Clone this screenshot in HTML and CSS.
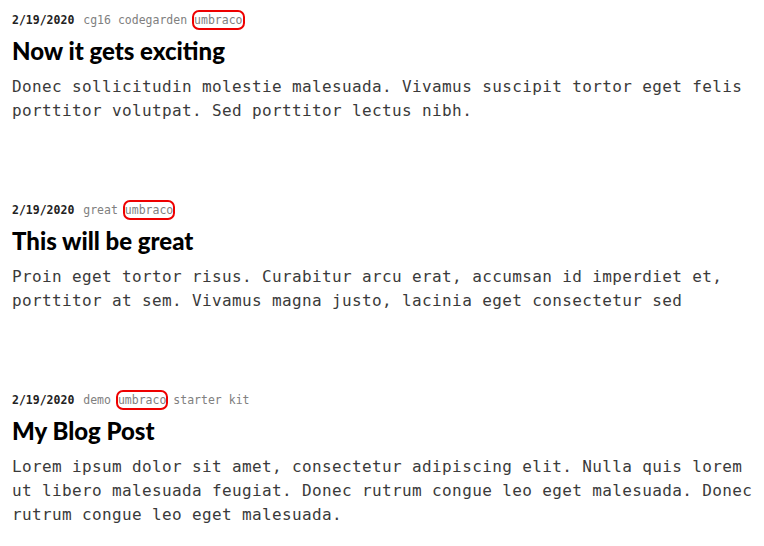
FILE: index.html
```html
<!DOCTYPE html>
<html>
<head>
<meta charset="utf-8">
<link rel="stylesheet" href="styles.css">
</head>
<body>
<main class="posts">
  <article class="post">
    <div class="meta"><span class="date">2/19/2020</span> <span class="tag">cg16</span> <span class="tag">codegarden</span> <span class="tag tag-active">umbraco</span></div>
    <h2 class="title">Now it gets exciting</h2>
    <p class="excerpt">Donec sollicitudin molestie malesuada. Vivamus suscipit tortor eget felis porttitor volutpat. Sed porttitor lectus nibh.</p>
  </article>
  <article class="post">
    <div class="meta"><span class="date">2/19/2020</span> <span class="tag">great</span> <span class="tag tag-active">umbraco</span></div>
    <h2 class="title">This will be great</h2>
    <p class="excerpt">Proin eget tortor risus. Curabitur arcu erat, accumsan id imperdiet et, porttitor at sem. Vivamus magna justo, lacinia eget consectetur sed</p>
  </article>
  <article class="post">
    <div class="meta"><span class="date">2/19/2020</span> <span class="tag">demo</span> <span class="tag tag-active">umbraco</span> <span class="tag">starter</span> <span class="tag">kit</span></div>
    <h2 class="title">My Blog Post</h2>
    <p class="excerpt">Lorem ipsum dolor sit amet, consectetur adipiscing elit. Nulla quis lorem ut libero malesuada feugiat. Donec rutrum congue leo eget malesuada. Donec rutrum congue leo eget malesuada.</p>
  </article>
</main>
</body>
</html>
```
FILE: styles.css
```css
html, body {
  margin: 0;
  padding: 0;
  background: #fff;
}
.posts {
  padding: 11px 8px 0 12px;
}
.post {
  margin-bottom: 78px;
}
.meta {
  font-family: "DejaVu Sans Mono", "Liberation Mono", monospace;
  font-size: 11.5px;
  line-height: 19px;
  height: 19px;
  color: #808080;
  white-space: nowrap;
}
.date {
  color: #222;
  font-weight: bold;
  margin-right: 2px;
}
.tag-active {
  padding: 1px 0;
  outline: 2px solid #e00;
  border-radius: 5px;
}
.title {
  font-family: Lato, "Open Sans", sans-serif;
  font-weight: 900;
  font-size: 24px;
  line-height: 29px;
  margin: 6px 0 0;
  color: #000;
}
.excerpt {
  font-family: "DejaVu Sans Mono", "Liberation Mono", monospace;
  font-size: 16px;
  letter-spacing: 0.37px;
  line-height: 24px;
  color: #3a3a3a;
  margin: 10px 0 0;
}
```
